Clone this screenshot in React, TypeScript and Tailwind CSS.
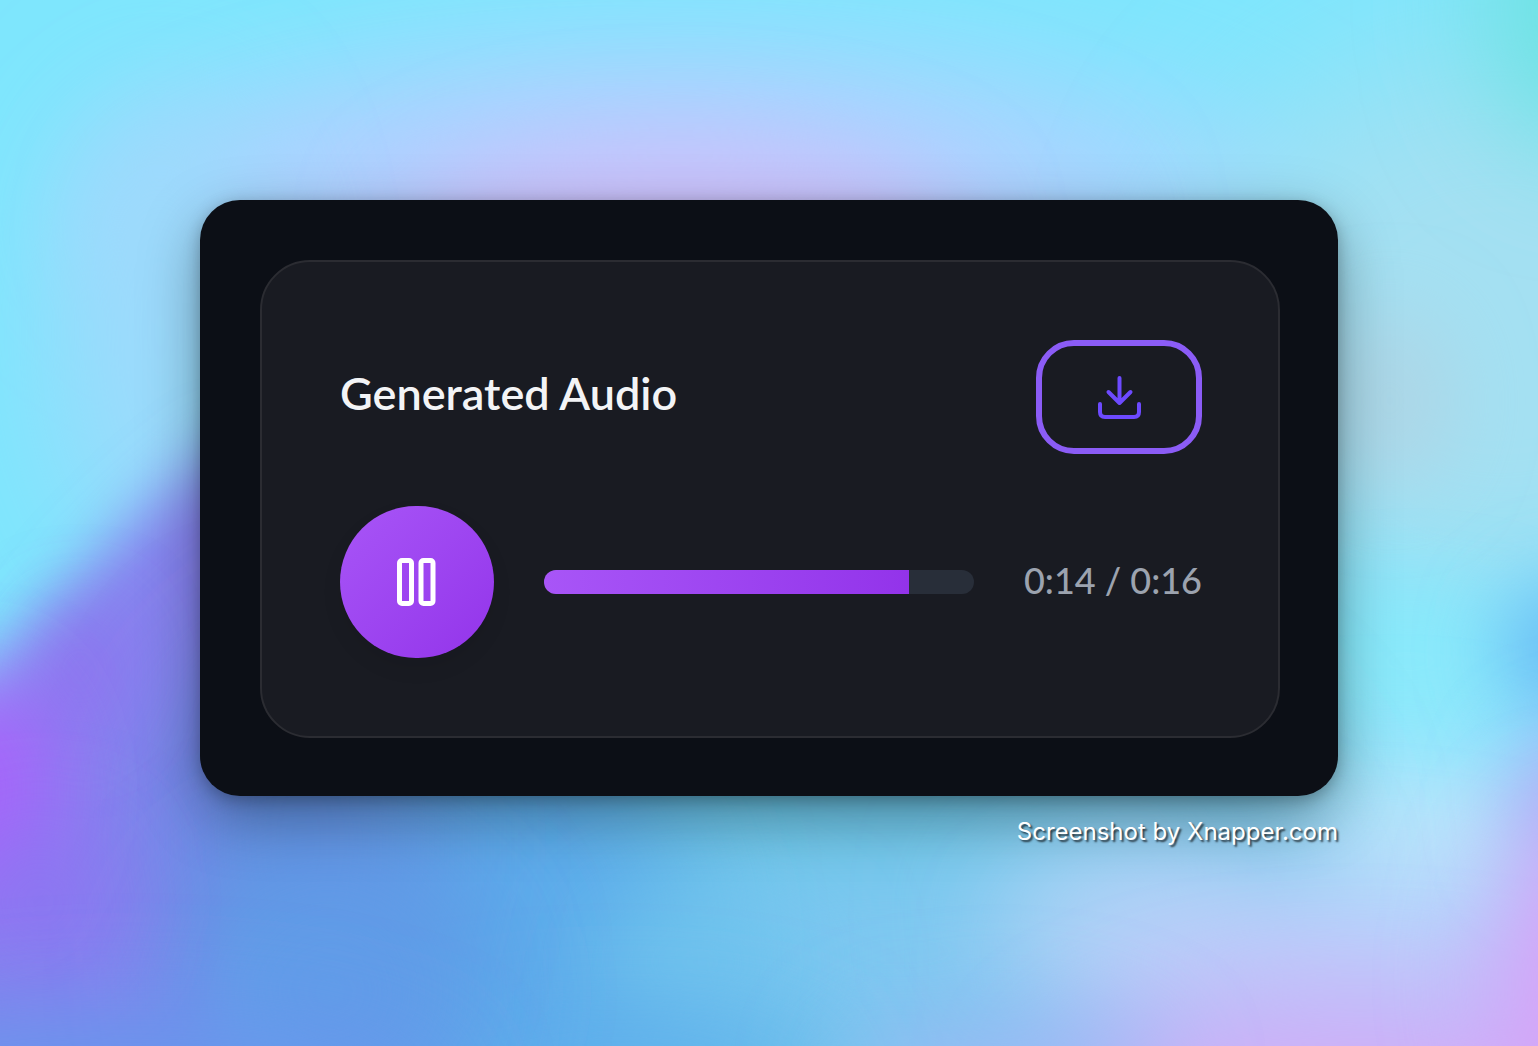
import { useState } from "react";

const DURATION = 16;
const ELAPSED = 14;
const PROGRESS = 85;

// x, y, rx, ry, colour, softness
const BLOBS: [number, number, number, number, string, number][] = [
  [700, 220, 620, 180, "#a2d8ff", 60],
  [1500, 330, 300, 280, "#a4e0f2", 80],
  [1390, 400, 60, 90, "#add6e6", 40],
  [620, 230, 480, 125, "#b0cfff", 60],
  [680, 240, 280, 100, "#cdc0fb", 50],
  [1590, 10, 100, 140, "#6ce2e0", 60],
  [160, 330, 110, 240, "#9cdafc", 60],
  [1410, 660, 130, 60, "#8aeafb", 40],
  [1580, 650, 80, 70, "#68bcf5", 40],
  [1390, 840, 200, 90, "#b8e6fb", 50],
  [860, 860, 460, 260, "#6ac6e6", 60],
  [900, 950, 260, 90, "#80c8f2", 60],
  [490, 940, 200, 220, "#5caaea", 60],
  [700, 960, 120, 60, "#70c4ee", 50],
  [620, 1070, 220, 50, "#5eaeec", 50],
  [1140, 910, 160, 80, "#a8d4f4", 60],
  [1320, 960, 280, 80, "#c0cefb", 60],
  [1590, 800, 80, 80, "#a8b0f6", 40],
  [1360, 1100, 320, 120, "#d0aff8", 50],
  [1590, 980, 100, 170, "#d8a2f8", 50],
  [1000, 1080, 160, 60, "#9cb8f6", 50],
];

function Wallpaper() {
  return (
    <svg
      className="absolute inset-0 -z-10 h-full w-full"
      viewBox="0 0 1538 1046"
      preserveAspectRatio="none"
      aria-hidden="true"
    >
      <defs>
        {[30, 40, 50, 60, 80].map((n) => (
          <filter key={n} id={`soft-${n}`} filterUnits="userSpaceOnUse" x="-400" y="-400" width="2400" height="1900">
            <feGaussianBlur stdDeviation={n} />
          </filter>
        ))}
      </defs>
      <rect width="1538" height="1046" fill="#7ee6fd" />
      {BLOBS.map(([cx, cy, rx, ry, fill, soft], i) => (
        <ellipse key={i} cx={cx} cy={cy} rx={rx} ry={ry} fill={fill} filter={`url(#soft-${soft})`} />
      ))}
      <path
        d="M-100 860 Q20 590 230 440 L420 480 L260 900 L240 1150 L-100 1150Z"
        fill="#8682ee"
        filter="url(#soft-30)"
      />
      <ellipse cx="300" cy="840" rx="130" ry="200" fill="#628ee0" filter="url(#soft-60)" />
      <ellipse cx="330" cy="990" rx="150" ry="140" fill="#619ce8" filter="url(#soft-60)" />
      <ellipse cx="80" cy="670" rx="40" ry="60" fill="#9072f0" filter="url(#soft-40)" />
      <ellipse cx="-20" cy="790" rx="80" ry="120" fill="#a666fa" filter="url(#soft-40)" />
      <ellipse cx="40" cy="900" rx="70" ry="70" fill="#8c74f2" filter="url(#soft-50)" />
      <ellipse cx="130" cy="1090" rx="320" ry="80" fill="#6896ec" filter="url(#soft-50)" />
    </svg>
  );
}

function DownloadIcon() {
  return (
    <svg width="48" height="48" viewBox="0 0 48 48" fill="none" stroke="#6d4aff" strokeWidth="4" strokeLinecap="round" strokeLinejoin="round">
      <path d="M24.500 5v25M13.500 19l11 11 11-11" />
      <path d="M5 31v8q0 5 5 5h29q5 0 5-5v-8" />
    </svg>
  );
}

function PauseIcon() {
  return (
    <svg width="60" height="60" viewBox="0 0 60 60" fill="none" stroke="currentColor" strokeWidth="5">
      <rect x="12.5" y="8.5" width="12" height="43" rx="2.5" />
      <rect x="34" y="8.5" width="12" height="43" rx="2.5" />
    </svg>
  );
}

function PlayIcon() {
  return (
    <svg width="60" height="60" viewBox="0 0 60 60" fill="none" stroke="currentColor" strokeWidth="5" strokeLinejoin="round">
      <path d="M16 9l32 21-32 21z" />
    </svg>
  );
}

function formatTime(s: number) {
  return `${Math.floor(s / 60)}:${String(s % 60).padStart(2, "0")}`;
}

function AudioPlayer() {
  const [playing, setPlaying] = useState(true);

  return (
    <section className="rounded-[50px] border-2 border-[#2b2c32] bg-[#191b22] py-[78px] pr-[76px] pl-[78px] font-['Lato',sans-serif]">
      <div className="flex items-center justify-between">
        <h2 className="pb-2 text-[45px] leading-[56px] font-semibold text-[#f3f4f6]">Generated Audio</h2>
        <button
          aria-label="Download audio"
          className="flex h-[114px] w-[166px] items-center justify-center rounded-[38px] border-6 border-[#8b5cf6]"
        >
          <DownloadIcon />
        </button>
      </div>
      <div className="mt-[52px] flex items-center gap-[50px]">
        <button
          aria-label={playing ? "Pause" : "Play"}
          onClick={() => setPlaying(!playing)}
          className="flex h-[152px] w-[154px] shrink-0 items-center justify-center rounded-full bg-linear-to-br from-[#a855f7] to-[#9333ea] text-white shadow-[0_10px_20px_rgba(0,0,0,0.08)]"
        >
          {playing ? <PauseIcon /> : <PlayIcon />}
        </button>
        <div
          role="progressbar"
          aria-label="Playback position"
          aria-valuenow={PROGRESS}
          className="h-6 flex-1 overflow-hidden rounded-full bg-[#282e39]"
        >
          <div className="h-full bg-linear-to-r from-[#a855f7] to-[#9333ea]" style={{ width: `${PROGRESS}%` }} />
        </div>
        <span className="pb-1 text-[36px] leading-[56px] font-medium whitespace-nowrap text-[#9ca3af]">
          {formatTime(ELAPSED)} / {formatTime(DURATION)}
        </span>
      </div>
    </section>
  );
}

export default function App() {
  return (
    <main className="relative isolate min-h-screen overflow-hidden p-[200px]">
      <Wallpaper />
      <div className="rounded-[40px] bg-[#0c0f16] pt-[60px] pr-[58px] pb-[58px] pl-[60px] shadow-[0_20px_60px_rgba(0,0,0,0.35),0_4px_16px_rgba(0,0,0,0.25)]">
        <AudioPlayer />
      </div>
      <p className="mt-5 text-right font-['Inter',sans-serif] text-2xl text-white [text-shadow:2px_2px_2px_rgba(0,0,0,0.7)]">
        Screenshot by Xnapper.com
      </p>
    </main>
  );
}
